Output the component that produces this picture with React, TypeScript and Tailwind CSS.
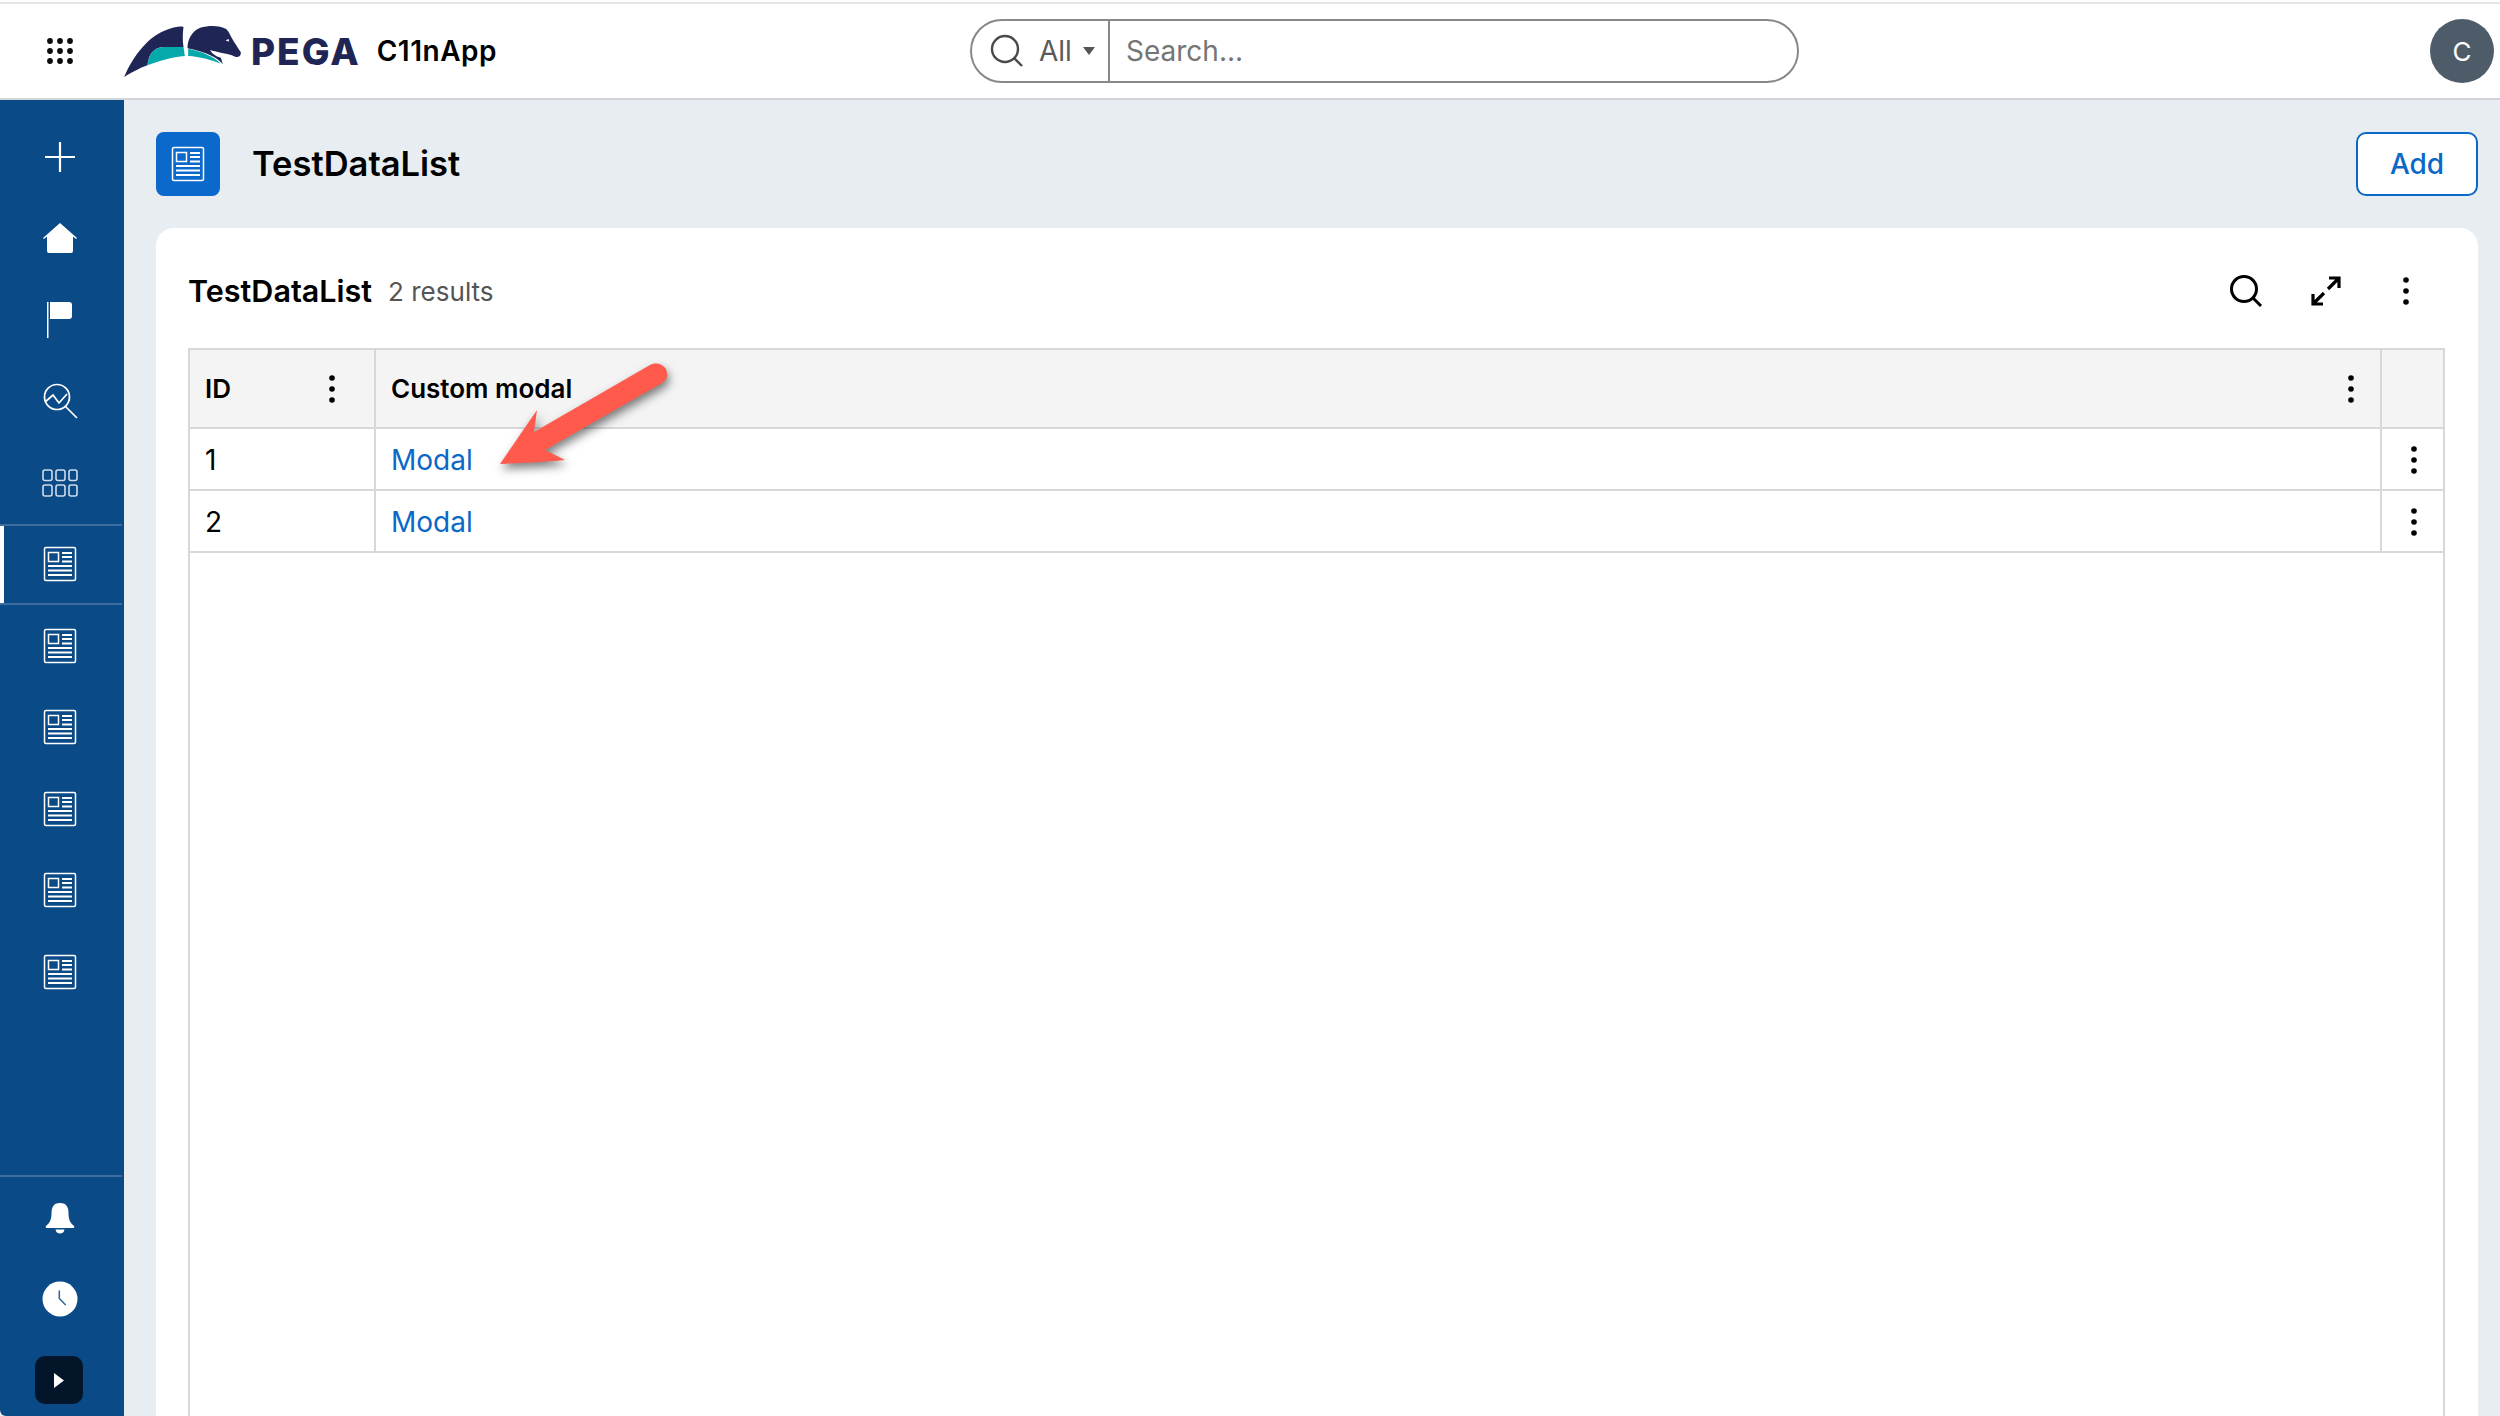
import type { ReactNode } from "react";

function NewsIcon() {
  return (
    <svg width="34" height="36" viewBox="0 0 34 36" fill="none" stroke="currentColor" strokeWidth="1.5">
      <rect x="1.5" y="1.5" width="31" height="33" rx="1.5" />
      <rect x="5.5" y="6.5" width="10" height="9" />
      <path d="M19 7h10M19 11h10M19 15.5h10M5 20h24M5 24.500h24M5 29h24" strokeWidth="1.8" />
    </svg>
  );
}

function Kebab() {
  return (
    <svg width="6" height="28" viewBox="0 0 6 28" fill="#000">
      <circle cx="3" cy="3" r="2.8" />
      <circle cx="3" cy="14" r="2.8" />
      <circle cx="3" cy="25" r="2.8" />
    </svg>
  );
}

function Logo() {
  return (
    <svg width="117" height="51" viewBox="72 45 350 153">
      <path
        d="M72 198C100 130 150 72 200 56C225 48 240 45 250 48C247 70 247 90 250 108L190 108C160 110 145 130 142 163C115 172 90 188 72 198Z"
        fill="#1f2555"
      />
      <path d="M142 163C145 130 160 110 190 108L250 108L254 135C215 138 175 150 142 163Z" fill="#04a9ac" />
      <path
        d="M262 112C262 85 275 60 300 50C330 42 360 44 378 54L385 62C396 85 412 108 422 124C423 136 414 140 405 137C392 130 378 128 362 125C350 122 338 120 330 117C336 130 350 137 362 140L368 160C352 140 320 124 262 112Z"
        fill="#1f2555"
      />
      <path d="M264 113C310 122 342 138 362 158C330 146 300 137 264 135Z" fill="#04a9ac" />
      <path d="M376 88L386 84L386 92Z" fill="#fff" />
    </svg>
  );
}

function NavItem({ children, active }: { children: ReactNode; active?: boolean }) {
  if (active) {
    return (
      <div className="relative flex h-[81.5px] w-[122px] items-center border-y-2 border-[#3f6c9f]">
        <div className="absolute left-0 top-0 h-full w-[4px] bg-white" />
        <div className="flex w-[120px] justify-center">{children}</div>
      </div>
    );
  }
  return <div className="flex h-[81.5px] w-[120px] items-center justify-center">{children}</div>;
}

function Sidebar() {
  return (
    <aside className="flex w-[124px] shrink-0 flex-col rounded-bl-[6px] bg-[#0a4a87] pt-[16px] text-white">
      <NavItem>
        <svg width="32" height="32" viewBox="0 0 32 32" stroke="currentColor" strokeWidth="2.2">
          <path d="M16 1v30M1 16h30" />
        </svg>
      </NavItem>
      <NavItem>
        <svg width="36" height="30" viewBox="0 0 36 30" fill="currentColor">
          <path d="M18 0L35 15L34 16L31 13.500V28a2 2 0 0 1-2 2H7a2 2 0 0 1-2-2V13.500L2 16L1 15Z" />
        </svg>
      </NavItem>
      <NavItem>
        <svg width="28" height="36" viewBox="0 0 28 36" fill="currentColor">
          <rect x="1" y="0" width="1.500" height="36" />
          <path d="M4 0H23a3 3 0 0 1 3 3V14a3 3 0 0 1-3 3H4Z" />
        </svg>
      </NavItem>
      <NavItem>
        <svg width="36" height="36" viewBox="0 0 36 36" fill="none" stroke="currentColor" strokeWidth="1.7">
          <circle cx="15" cy="14" r="12.500" />
          <path d="M23.500 23.500L35 35M3 19L11 12L17 20L25 11" />
        </svg>
      </NavItem>
      <NavItem>
        <svg width="36" height="28" viewBox="0 0 36 28" fill="none" stroke="#cfdcea" strokeWidth="1.6">
          <rect x="1" y="1" width="9" height="10.500" rx="2" />
          <rect x="14" y="1" width="9" height="10.500" rx="2" />
          <rect x="27" y="1" width="8" height="10.500" rx="2" />
          <rect x="1" y="16" width="9" height="11" rx="2" />
          <rect x="14" y="16" width="9" height="11" rx="2" />
          <rect x="27" y="16" width="8" height="11" rx="2" />
        </svg>
      </NavItem>
      <NavItem active>
        <NewsIcon />
      </NavItem>
      <NavItem>
        <NewsIcon />
      </NavItem>
      <NavItem>
        <NewsIcon />
      </NavItem>
      <NavItem>
        <NewsIcon />
      </NavItem>
      <NavItem>
        <NewsIcon />
      </NavItem>
      <NavItem>
        <NewsIcon />
      </NavItem>

      <div className="mt-auto w-[122px] border-t-2 border-[#3f6c9f]">
        <NavItem>
          <svg width="30" height="32" viewBox="0 0 30 32" fill="currentColor">
            <path d="M15 1C8 1 6.500 6 6.500 11C6.500 18 4.500 21 1.500 23.500C0 25 .5 26 2 26H28C29.500 26 30 25 28.500 23.500C25.500 21 23.500 18 23.500 11C23.500 6 22 1 15 1Z" />
            <path d="M10.500 27.500H19.500C19 30.500 17 31.500 15 31.500C13 31.500 11 30.500 10.500 27.500Z" />
          </svg>
        </NavItem>
        <NavItem>
          <svg width="36" height="36" viewBox="0 0 36 36">
            <circle cx="18" cy="18" r="17.500" fill="#fff" />
            <path d="M17.300 9.500V17.500L23.700 24" fill="none" stroke="#2f6299" strokeWidth="1.500" />
          </svg>
        </NavItem>
      </div>
      <div className="ml-[35px] mb-[12px] mt-[16px] flex h-[48px] w-[48px] items-center justify-center rounded-[10px] bg-[#021529]">
        <svg width="10" height="15" viewBox="0 0 10 15" fill="#fff">
          <path d="M0 0L10 7.500L0 15Z" />
        </svg>
      </div>
    </aside>
  );
}

function TopBar() {
  return (
    <header className="flex h-[96px] shrink-0 items-center border-b-2 border-[#d1d5d9] bg-white">
      <div className="flex w-[970px] shrink-0 items-center">
        <div className="flex w-[124px] justify-center pr-1">
          <svg width="26" height="26" viewBox="0 0 26 26" fill="#0b0b0b">
            <circle cx="3" cy="3" r="2.900" />
            <circle cx="13" cy="3" r="2.900" />
            <circle cx="23" cy="3" r="2.900" />
            <circle cx="3" cy="13" r="2.900" />
            <circle cx="13" cy="13" r="2.900" />
            <circle cx="23" cy="13" r="2.900" />
            <circle cx="3" cy="23" r="2.900" />
            <circle cx="13" cy="23" r="2.900" />
            <circle cx="23" cy="23" r="2.900" />
          </svg>
        </div>
        <Logo />
        <span className="ml-[10px] text-[37px] leading-none font-extrabold tracking-[2px] text-[#1f2555]">PEGA</span>
        <span className="ml-[16px] text-[28px] leading-none font-semibold tracking-[0.5px] text-black">C11nApp</span>
      </div>
      <div className="flex h-[64px] w-[829px] shrink-0 items-center rounded-full border-2 border-[#888888] text-[28px] text-[#5a5a5a]">
        <div className="flex h-full w-[138px] shrink-0 items-center border-r-2 border-[#888888] pl-[18px]">
          <svg width="34" height="34" viewBox="0 0 34 34" fill="none" stroke="#4a4a4a" strokeWidth="2.400">
            <circle cx="15" cy="15" r="13" />
            <path d="M24 24L32 32" />
          </svg>
          <span className="ml-[15px]">All</span>
          <span className="ml-[11px] h-0 w-0 border-x-[6px] border-t-[8px] border-x-transparent border-t-[#555555]" />
        </div>
        <span className="pl-[16px] text-[#757575]">Search...</span>
      </div>
      <div className="ml-auto mr-[6px] flex h-[64px] w-[64px] items-center justify-center rounded-full bg-[#4e5c69] text-[26px] text-white">
        C
      </div>
    </header>
  );
}

function Arrow() {
  return (
    <svg
      className="absolute left-[480px] top-[350px] overflow-visible drop-shadow-[2px_5px_5px_rgba(0,0,0,0.5)]"
      width="200"
      height="125"
      viewBox="480 350 200 125"
    >
      <path
        d="M500 464L537 410L534 432L650 365C660 360 668 368 667 375C667 379 665 381 662 383L545 450L565 460C545 462 520 463 500 464Z"
        fill="#ff5a4c"
      />
    </svg>
  );
}

function DataTable() {
  const rows = ["1", "2"];
  return (
    <div className="flex min-h-0 flex-1 flex-col border-x-2 border-t-2 border-[#d8d8d8] text-[28px] text-black">
      <div className="grid h-[79px] shrink-0 grid-cols-[186px_1fr_61px] border-b-2 border-[#d8d8d8] bg-[#f4f4f4] text-[26px] font-semibold">
        <div className="flex items-center justify-between border-r-2 border-[#d8d8d8] pl-[15px] pr-[39px]">
          <span>ID</span>
          <Kebab />
        </div>
        <div className="flex items-center justify-between border-r-2 border-[#d8d8d8] pl-[15px] pr-[26px]">
          <span>Custom modal</span>
          <Kebab />
        </div>
        <div />
      </div>
      {rows.map((id) => (
        <div key={id} className="grid h-[62px] shrink-0 grid-cols-[186px_1fr_61px] border-b-2 border-[#d8d8d8]">
          <div className="flex items-center border-r-2 border-[#d8d8d8] pl-[15px] pt-[2px]">{id}</div>
          <div className="flex items-center border-r-2 border-[#d8d8d8] pl-[15px] pt-[2px]">
            <a className="text-[#0b68c7]">Modal</a>
          </div>
          <div className="flex items-center justify-center pl-[2px] pt-[2px]">
            <Kebab />
          </div>
        </div>
      ))}
    </div>
  );
}

export default function App() {
  return (
    <div className="relative flex h-[1416px] flex-col overflow-hidden bg-[#e8edf2] font-['Inter',sans-serif]">
      <div className="h-[2px] shrink-0 bg-white" />
      <div className="h-[2px] shrink-0 bg-[#e5e5e5]" />
      <TopBar />
      <div className="flex min-h-0 flex-1">
        <Sidebar />
        <main className="flex min-w-0 flex-1 flex-col pl-[32px] pr-[22px] pt-[32px]">
          <div className="flex h-[64px] shrink-0 items-center">
            <div className="flex h-[64px] w-[64px] items-center justify-center rounded-[8px] bg-[#0b69cb] text-white">
              <NewsIcon />
            </div>
            <h1 className="ml-[32px] text-[34.500px] font-semibold text-black">TestDataList</h1>
            <button className="ml-auto h-[64px] w-[122px] rounded-[10px] border-2 border-[#0b68c7] bg-white text-[28px] font-medium text-[#0b68c7]">
              Add
            </button>
          </div>
          <section className="mt-[32px] flex min-h-0 flex-1 flex-col rounded-t-[18px] bg-white pl-[32px] pr-[33px] pt-[32px]">
            <div className="flex h-[62px] shrink-0 items-center">
              <h2 className="text-[30.500px] font-semibold text-black">TestDataList</h2>
              <span className="ml-[16px] text-[26px] text-[#555555]">2 results</span>
              <div className="-mr-[1px] ml-auto flex">
                <div className="flex w-[80px] justify-center">
                  <svg width="34" height="34" viewBox="0 0 34 34" fill="none" stroke="#000" strokeWidth="3">
                    <circle cx="15" cy="15" r="12.500" />
                    <path d="M24 24L32 32" />
                  </svg>
                </div>
                <div className="flex w-[80px] items-center justify-center">
                  <svg width="30" height="30" viewBox="0 0 30 30" fill="none" stroke="#000" strokeWidth="3.200">
                    <path d="M18 2H28V12M28 2L17 13M2 18V28H12M2 28L13 17" />
                  </svg>
                </div>
                <div className="flex w-[80px] items-center justify-center">
                  <Kebab />
                </div>
              </div>
            </div>
            <div className="mt-[26px] flex min-h-0 flex-1 flex-col">
              <DataTable />
            </div>
          </section>
        </main>
      </div>
      <Arrow />
    </div>
  );
}
